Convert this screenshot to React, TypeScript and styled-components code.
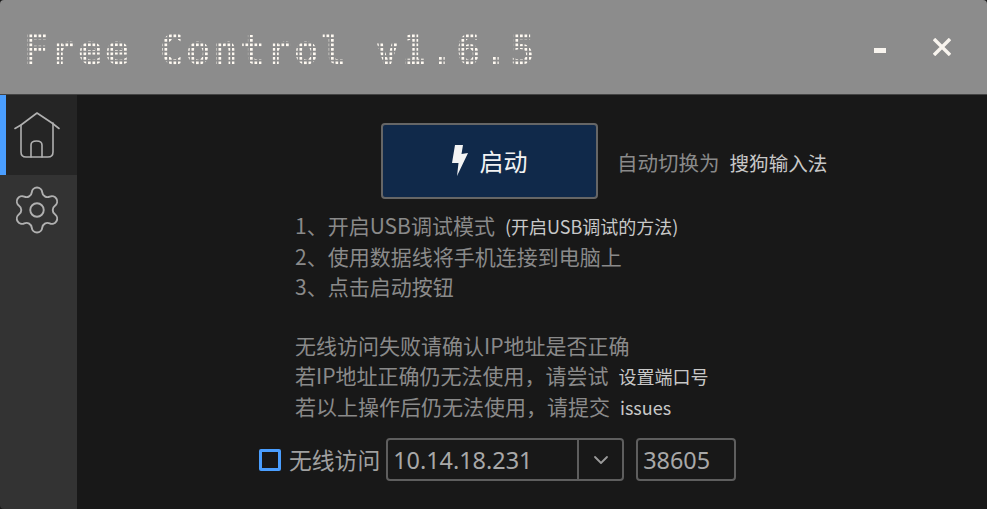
import React from 'react';
import styled, { createGlobalStyle } from 'styled-components';
import { Settings, ChevronDown } from 'lucide-react';

const GlobalStyle = createGlobalStyle`
  html, body {
    margin: 0;
    padding: 0;
    background: #181818;
  }
  body {
    font-family: "Noto Sans CJK SC", "Liberation Sans", sans-serif;
  }
`;

const Window = styled.div`
  width: 987px;
  height: 509px;
  display: flex;
  flex-direction: column;
  overflow: hidden;
  background: #181818;
  border-radius: 4px;
`;

const TitleBar = styled.div`
  height: 94px;
  flex: none;
  display: flex;
  align-items: center;
  justify-content: space-between;
  padding: 0 36px 0 24px;
  background: #8c8c8c;
  border-bottom: 1px solid #444;
`;

const Title = styled.h1`
  margin: 6px 0 0;
  font-family: "DejaVu Sans Mono", monospace;
  font-weight: 700;
  font-size: 41px;
  line-height: 45px;
  letter-spacing: 2.32px;
  color: #fffaf2;
  white-space: nowrap;
  -webkit-mask-image: linear-gradient(90deg, #000 3px, transparent 3px), linear-gradient(#000 3px, transparent 3px);
  mask-image: linear-gradient(90deg, #000 3px, transparent 3px), linear-gradient(#000 3px, transparent 3px);
  -webkit-mask-size: 4.5px 4.5px;
  mask-size: 4.5px 4.5px;
  -webkit-mask-position: 1px 2px;
  mask-position: 1px 2px;
  -webkit-mask-composite: source-in;
  mask-composite: intersect;
`;

const WindowButtons = styled.div`
  display: flex;
  align-items: center;
  gap: 47px;
`;

const Minimize = styled.div`
  width: 12px;
  height: 5px;
  background: #f8f4ee;
  margin-top: 6px;
`;

const Body = styled.div`
  flex: 1;
  display: flex;
  min-height: 0;
`;

const Sidebar = styled.nav`
  width: 77px;
  flex: none;
  background: #333333;
  display: flex;
  flex-direction: column;
`;

const NavItem = styled.div<{ $active?: boolean }>`
  height: ${(p) => (p.$active ? 80 : 70)}px;
  box-sizing: border-box;
  display: flex;
  align-items: center;
  justify-content: center;
  color: #b0b0b0;
  background: ${(p) => (p.$active ? '#252525' : 'transparent')};
  border-left: 6px solid ${(p) => (p.$active ? '#4a9eff' : 'transparent')};
  padding-right: 9px;
`;

const Content = styled.main`
  flex: 1;
  display: flex;
  flex-direction: column;
  padding: 28px 0 0 218px;
  color: #8a8a8a;
`;

const StartRow = styled.div`
  display: flex;
  align-items: center;
  margin-left: 86px;
  gap: 19px;
`;

const StartButton = styled.button`
  width: 217px;
  height: 76px;
  display: flex;
  align-items: center;
  justify-content: center;
  gap: 12px;
  background: #10294a;
  border: 2px solid #666;
  border-radius: 4px;
  color: #f2f2f2;
  font-family: inherit;
  font-size: 24px;
  padding: 0 0 2px;
`;

const InputMethod = styled.div`
  font-size: 20.5px;
  line-height: 28px;
  color: #8a8a8a;
  margin-top: 3px;
  white-space: nowrap;
`;

const Highlight = styled.span<{ $size?: number }>`
  color: #c8c8c8;
  margin-left: 10px;
  font-size: ${(p) => p.$size ?? 19.6}px;
`;

const Help = styled.div`
  margin-top: 11px;
  font-size: 21px;
  line-height: 30px;
`;

const Spacer = styled.div`
  height: 29px;
`;

const HelpLine = styled.div`
  white-space: nowrap;
`;

const WirelessRow = styled.div`
  display: flex;
  align-items: center;
  margin: 16px 0 0 -36px;
`;

const CheckBox = styled.div`
  width: 22px;
  height: 22px;
  box-sizing: border-box;
  border: 3px solid #4a9eff;
  border-radius: 2px;
  margin-right: 8px;
`;

const WirelessLabel = styled.span`
  font-size: 22.8px;
  color: #a0a0a0;
  margin-right: 6px;
  white-space: nowrap;
`;

const Field = styled.div<{ $width: number }>`
  width: ${(p) => p.$width}px;
  height: 43px;
  box-sizing: border-box;
  display: flex;
  align-items: center;
  border: 2px solid #5e5e5e;
  border-radius: 4px;
  font-family: "Noto Sans", sans-serif;
  font-size: 23.4px;
  color: #a8a8a8;
`;

const FieldText = styled.span`
  flex: 1;
  padding-left: 5px;
`;

const DropButton = styled.span`
  width: 43px;
  height: 100%;
  flex: none;
  display: flex;
  align-items: center;
  justify-content: center;
  border-left: 2px solid #5e5e5e;
  color: #9a9a9a;
`;

const PortField = styled(Field)`
  margin-left: 12px;
`;

const HomeIcon = () => (
  <svg width="46" height="46" viewBox="0 0 46 46" fill="none" stroke="currentColor" strokeWidth="1.6" strokeLinejoin="round" strokeLinecap="round">
    <path d="M1 16.5 L7 13 L23 1 L38 11 L45 16.5" />
    <path d="M7 13 V40 Q7 45 12 45 H34 Q39 45 39 40 V11" />
    <path d="M17 45 V33 Q17 29 22.5 29 Q28 29 28 33 V45" />
  </svg>
);

const BoltIcon = () => (
  <svg width="16" height="31" viewBox="0 0 16 31" fill="#f4f4f4">
    <path d="M3 0 H11 L9.5 9 L16 8 L5 31 L6.5 18 L0 18 Z" />
  </svg>
);

const App: React.FC = () => {
  return (
    <Window>
      <GlobalStyle />
      <TitleBar>
        <Title>Free Control v1.6.5</Title>
        <WindowButtons>
          <Minimize />
          <svg width="18" height="18" viewBox="0 0 18 18" stroke="#f8f4ee" strokeWidth="3.4">
            <path d="M1 1 L17 17 M17 1 L1 17" />
          </svg>
        </WindowButtons>
      </TitleBar>
      <Body>
        <Sidebar>
          <NavItem $active>
            <HomeIcon />
          </NavItem>
          <NavItem>
            <Settings size={54} strokeWidth={0.85} />
          </NavItem>
        </Sidebar>
        <Content>
          <StartRow>
            <StartButton>
              <BoltIcon />
              启动
            </StartButton>
            <InputMethod>
              自动切换为<Highlight>搜狗输入法</Highlight>
            </InputMethod>
          </StartRow>
          <Help>
            <HelpLine>
              1、开启USB调试模式<Highlight $size={18}>(开启USB调试的方法)</Highlight>
            </HelpLine>
            <HelpLine>2、使用数据线将手机连接到电脑上</HelpLine>
            <HelpLine>3、点击启动按钮</HelpLine>
            <Spacer />
            <HelpLine>无线访问失败请确认IP地址是否正确</HelpLine>
            <HelpLine>
              若IP地址正确仍无法使用，请尝试<Highlight $size={18}>设置端口号</Highlight>
            </HelpLine>
            <HelpLine>
              若以上操作后仍无法使用，请提交<Highlight $size={18}>issues</Highlight>
            </HelpLine>
          </Help>
          <WirelessRow>
            <CheckBox />
            <WirelessLabel>无线访问</WirelessLabel>
            <Field $width={238}>
              <FieldText>10.14.18.231</FieldText>
              <DropButton>
                <ChevronDown size={24} strokeWidth={1.8} />
              </DropButton>
            </Field>
            <PortField $width={100}>
              <FieldText>38605</FieldText>
            </PortField>
          </WirelessRow>
        </Content>
      </Body>
    </Window>
  );
};

export default App;
